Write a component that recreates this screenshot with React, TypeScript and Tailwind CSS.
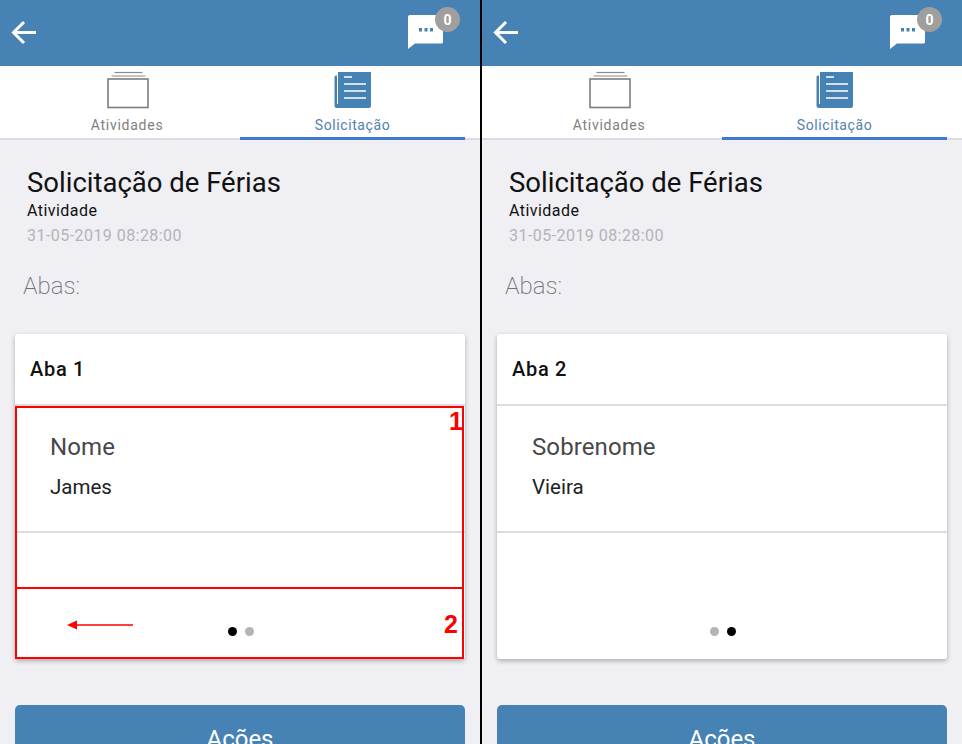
function ChatIcon() {
  return (
    <svg width="36" height="34" viewBox="0 0 36 34" className="absolute left-0 top-0">
      <path d="M2 0H33.500a1.500 1.500 0 0 1 1.500 1.500V27a1.500 1.500 0 0 1-1.500 1.500H7L0 34V2a2 2 0 0 1 2-2z" fill="#fff" />
      <rect x="11" y="13" width="3" height="3.500" fill="#4682b4" />
      <rect x="16.500" y="13" width="3" height="3.500" fill="#4682b4" />
      <rect x="22" y="13" width="3" height="3.500" fill="#4682b4" />
    </svg>
  );
}

function TrayIcon() {
  return (
    <svg width="44" height="38" viewBox="0 0 44 38" fill="none">
      <rect x="1" y="8" width="40" height="28.500" stroke="#7d7d7d" strokeWidth="1.600" fill="none" />
      <path d="M4.500 5H38.500" stroke="#8a8a8a" strokeWidth="1.200" />
      <path d="M7.500 1.500H35.500" stroke="#8a8a8a" strokeWidth="1.200" />
    </svg>
  );
}

function NewsIcon() {
  return (
    <svg width="38" height="38" viewBox="0 0 38 38">
      <path d="M4 1H37V35a2 2 0 0 1-2 2H3a2.500 2.500 0 0 1-2.500-2.500V6a1.500 1.500 0 0 1 1.500-1.500H3V33H4z" fill="#4682b4" />
      <path d="M10 6H18M10 13H32M10 20H32M10 27H32" stroke="#fff" strokeWidth="1.300" />
    </svg>
  );
}

function Phone({ tab, label, value, active }: { tab: string; label: string; value: string; active: number }) {
  return (
    <div className="w-[480px] h-[744px] shrink-0 overflow-hidden bg-[#efeff4] flex flex-col">
      <div className="h-[66px] bg-[#4682b4] flex items-center justify-between shrink-0">
        <svg width="26" height="26" viewBox="0 0 26 26" className="ml-[11px]" fill="none" stroke="#fff" strokeWidth="3">
          <path d="M25 12.500H3" />
          <path d="M13 2L2.500 12.500L13 23" />
        </svg>
        <div className="relative w-[52px] h-[40px] mr-[20px] mt-[-2px]">
          <div className="absolute left-0 top-[3px]"><ChatIcon /></div>
          <div className="absolute right-0 top-[-5px] w-[25px] h-[25px] rounded-full bg-[#a09f9e] text-white text-[14px] font-bold flex items-center justify-center leading-none">0</div>
        </div>
      </div>
      <div className="h-[74px] shrink-0 bg-white border-b-2 border-[#dcdce0] flex pr-[15px]">
        <div className="w-[240px] pl-[14px] flex flex-col items-center pt-[5px]">
          <div className="h-[38px] ml-[4px]"><TrayIcon /></div>
          <div className="text-[14px] leading-[16px] mt-[8px] tracking-[0.75px] text-[#7f7f7f]">Atividades</div>
        </div>
        <div className="flex-1 flex flex-col items-center pt-[5px] border-b-[3px] border-[#3f7ad0] mb-[-2px]">
          <div className="h-[38px]"><NewsIcon /></div>
          <div className="text-[14px] leading-[16px] mt-[8px] tracking-[0.6px] text-[#4f81ad]">Solicitação</div>
        </div>
      </div>
      <div className="pl-[27px] pt-[26px]">
        <div className="text-[27.500px] leading-[34px] text-[#111]">Solicitação de Férias</div>
        <div className="text-[16px] leading-[18px] mt-[2px] tracking-[0.45px] text-[#111]">Atividade</div>
        <div className="text-[16px] leading-[18px] mt-[7px] tracking-[0.45px] text-[#b4b4b8]">31-05-2019 08:28:00</div>
      </div>
      <div className="pl-[23px] mt-[26px] text-[24px] leading-[30px] font-extralight text-[#707074]">Abas:</div>
      <div className="mx-[15px] mt-[33px] h-[325px] shrink-0 bg-white rounded-[3px] shadow-[0_2px_5px_rgba(0,0,0,0.28)] flex flex-col">
        <div className="h-[72px] shrink-0 border-b-2 border-[#dcdce0] pl-[15px] flex items-center text-[20px] font-medium tracking-[0.7px] text-[#111]">{tab}</div>
        <div className="h-[127px] shrink-0 border-b-2 border-[#dcdce0] pl-[35px] pt-[25px]">
          <div className="text-[24px] leading-[32px] tracking-[0.1px] text-[#48484a]">{label}</div>
          <div className="text-[20.500px] leading-[26px] mt-[11px] text-[#222]">{value}</div>
        </div>
        <div className="flex-1 flex justify-center items-end gap-[8px] pb-[23px] pl-[1px]">
          <span className={`w-[9px] h-[9px] rounded-full ${active === 0 ? "bg-black" : "bg-[#b4b4b4]"}`} />
          <span className={`w-[9px] h-[9px] rounded-full ${active === 1 ? "bg-black" : "bg-[#b4b4b4]"}`} />
        </div>
      </div>
      <div className="mx-[15px] mt-[46px] h-[70px] shrink-0 bg-[#4682b4] rounded-[5px] flex justify-center pt-[18px] text-[24px] leading-[32px] text-white">Ações</div>
    </div>
  );
}

export default function App() {
  return (
    <div className="relative w-[962px] h-[744px] overflow-hidden flex font-['Roboto',sans-serif]">
      <Phone tab="Aba 1" label="Nome" value="James" active={0} />
      <div className="w-[2px] shrink-0 bg-black" />
      <Phone tab="Aba 2" label="Sobrenome" value="Vieira" active={1} />
      <div className="absolute left-[15px] top-[406px] w-[449px] h-[183px] border-2 border-[#fe0000]" />
      <div className="absolute left-[15px] top-[587px] w-[449px] h-[72px] border-2 border-[#fe0000]" />
      <div className="absolute left-[449px] top-[405px] text-[25px] leading-[32px] font-bold text-[#fe0000] font-['Liberation_Sans',sans-serif]">1</div>
      <div className="absolute left-[444px] top-[608px] text-[25px] leading-[32px] font-bold text-[#fe0000] font-['Liberation_Sans',sans-serif]">2</div>
      <svg width="68" height="12" viewBox="0 0 68 12" className="absolute left-[66px] top-[619px]">
        <path d="M67 6H8" stroke="#fe0000" strokeWidth="1.600" />
        <path d="M1 6L11 1.500V10.500z" fill="#fe0000" />
      </svg>
    </div>
  );
}
